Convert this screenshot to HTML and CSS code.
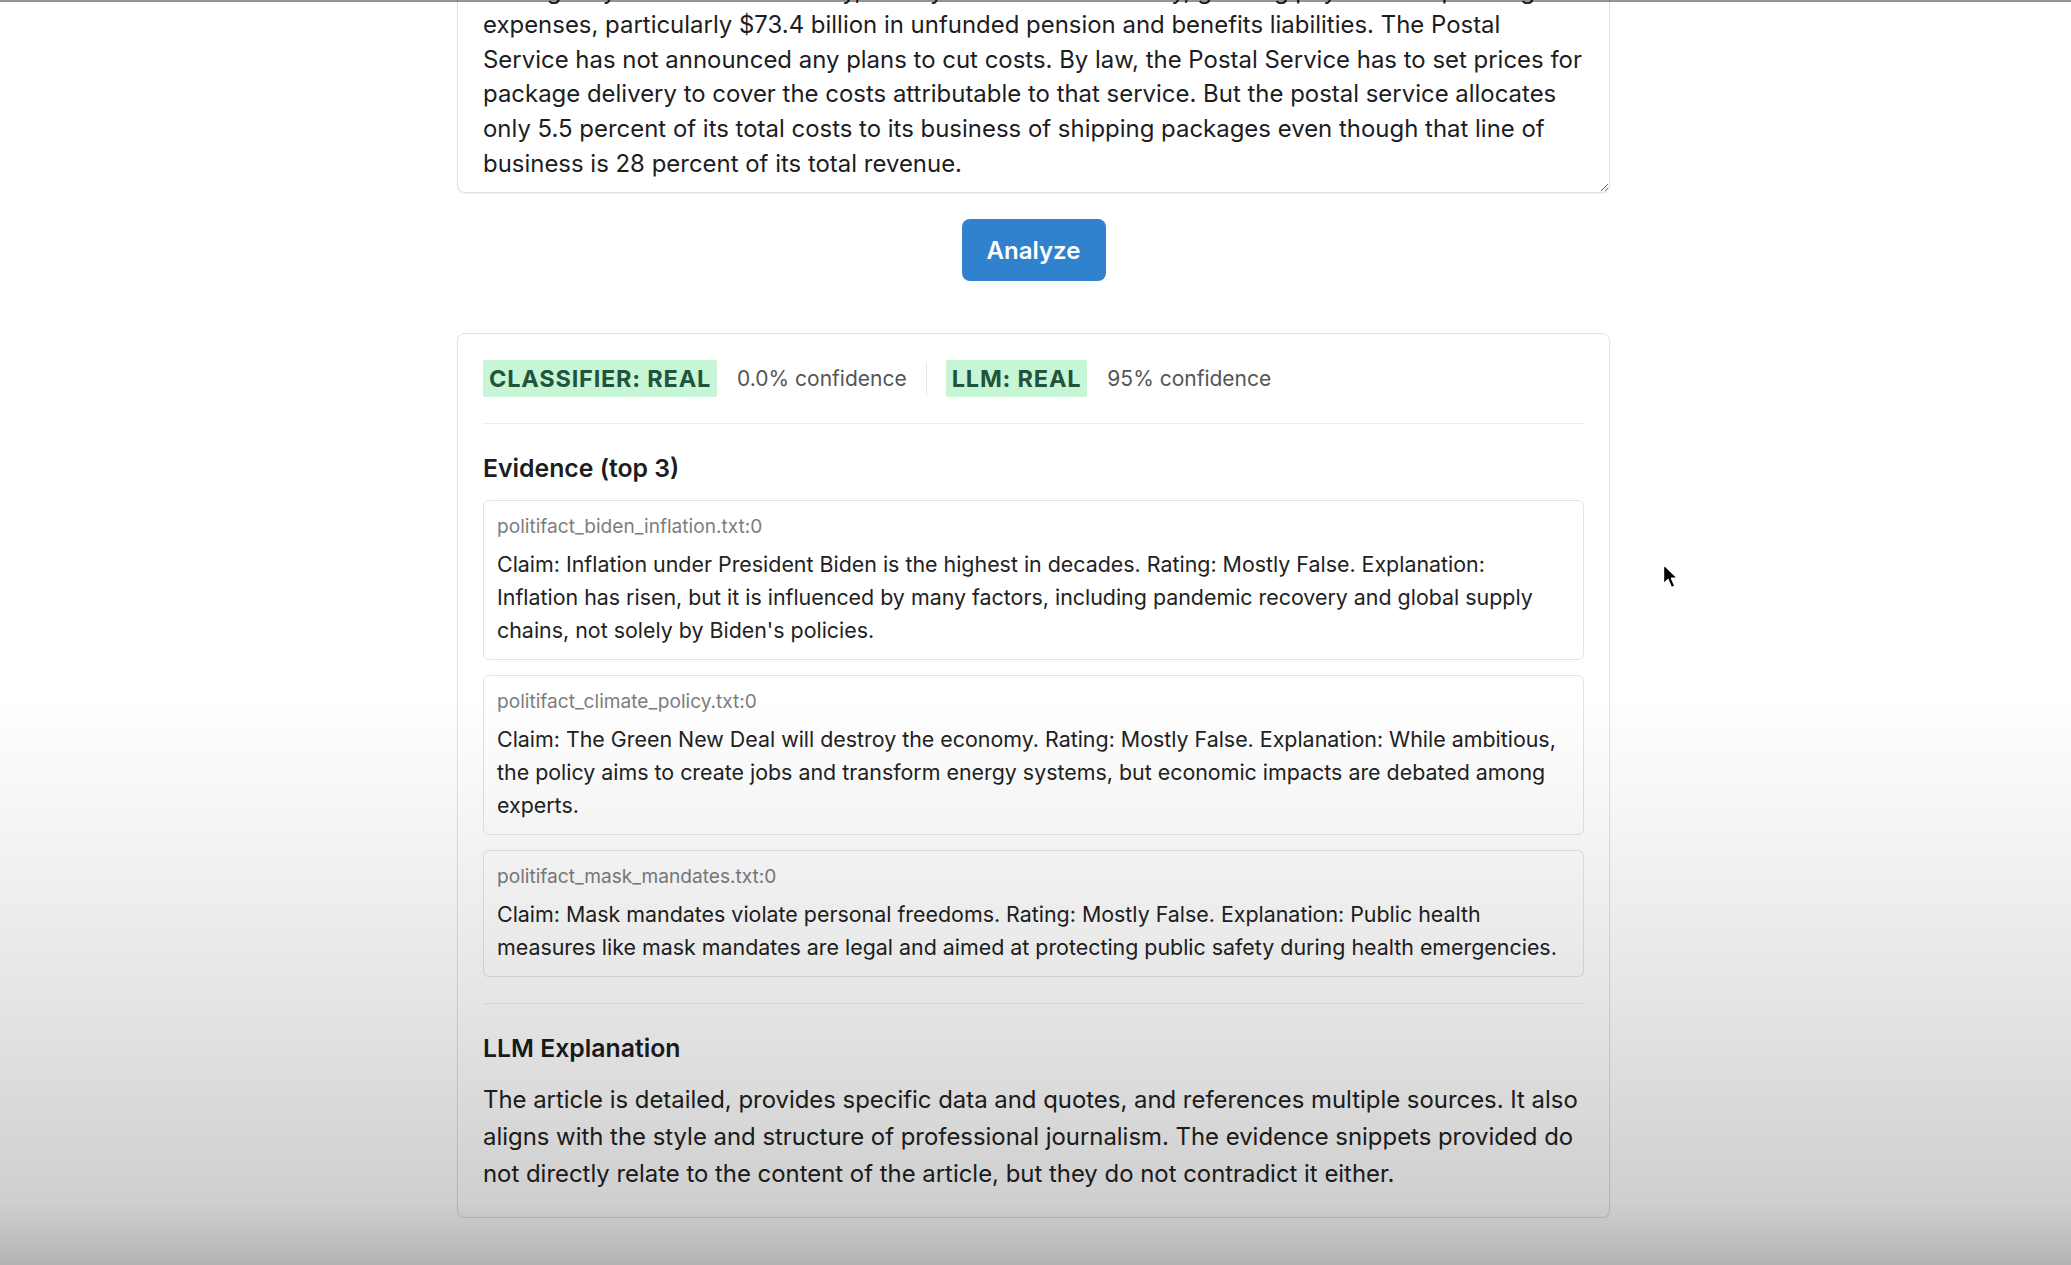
FILE: index.html
```html
<!DOCTYPE html>
<html lang="en">
<head>
<meta charset="utf-8">
<title>Fake News Analyzer</title>
<link rel="stylesheet" href="styles.css">
</head>
<body>
<main class="page">
<textarea class="article" spellcheck="false">The U.S. Postal Service lost $5.6 billion in its latest fiscal year, its tenth straight loss.
The agency's finances are shaky, mostly because of its heavy, growing payroll and operating
expenses, particularly $73.4 billion in unfunded pension and benefits liabilities. The Postal
Service has not announced any plans to cut costs. By law, the Postal Service has to set prices for
package delivery to cover the costs attributable to that service. But the postal service allocates
only 5.5 percent of its total costs to its business of shipping packages even though that line of
business is 28 percent of its total revenue.</textarea>

  <div class="actions">
    <button class="analyze" type="button">Analyze</button>
  </div>

  <section class="result">
    <div class="verdicts">
      <span class="badge">CLASSIFIER: REAL</span>
      <span class="conf">0.0% confidence</span>
      <span class="sep"></span>
      <span class="badge">LLM: REAL</span>
      <span class="conf">95% confidence</span>
    </div>

    <div class="evidence">
      <h3 class="title">Evidence (top 3)</h3>
      <div class="ev-list">
        <div class="ev">
          <div class="src">politifact_biden_inflation.txt:0</div>
          <div class="txt">Claim: Inflation under President Biden is the highest in decades. Rating: Mostly False. Explanation: Inflation has risen, but it is influenced by many factors, including pandemic recovery and global supply chains, not solely by Biden's policies.</div>
        </div>
        <div class="ev">
          <div class="src">politifact_climate_policy.txt:0</div>
          <div class="txt">Claim: The Green New Deal will destroy the economy. Rating: Mostly False. Explanation: While ambitious, the policy aims to create jobs and transform energy systems, but economic impacts are debated among experts.</div>
        </div>
        <div class="ev">
          <div class="src">politifact_mask_mandates.txt:0</div>
          <div class="txt">Claim: Mask mandates violate personal freedoms. Rating: Mostly False. Explanation: Public health measures like mask mandates are legal and aimed at protecting public safety during health emergencies.</div>
        </div>
      </div>
    </div>

    <div class="explain">
      <h3 class="title title-explain">LLM Explanation</h3>
      <p class="explain-text">The article is detailed, provides specific data and quotes, and references multiple sources. It also aligns with the style and structure of professional journalism. The evidence snippets provided do not directly relate to the content of the article, but they do not contradict it either.</p>
    </div>
  </section>
</main>

<svg class="cursor" width="20" height="28" viewBox="0 0 20 28" aria-hidden="true">
  <path d="M1.5 1.5 L1.5 21 L6 16.6 L9.4 24.6 L12.8 23.1 L9.5 15.3 L15.6 15.3 Z" fill="#000" stroke="#fff" stroke-width="1.4" stroke-linejoin="round"/>
</svg>
<div class="shade" aria-hidden="true"></div>
</body>
</html>
```

FILE: styles.css
```css
html, body {
  margin: 0;
  background: #ffffff;
}

body {
  padding-right: 4px;
  font-family: Inter, "Liberation Sans", sans-serif;
  color: #1d1d1f;
  overflow: hidden;
}

.page {
  width: 1153px;
  margin: -74px auto 0;
}

.article {
  display: block;
  box-sizing: border-box;
  width: 100%;
  height: 267px;
  margin: 0;
  padding: 12px 25px;
  border: 1px solid #e2e2e2;
  border-radius: 8px;
  font-family: inherit;
  font-size: 23.95px;
  line-height: 34.6px;
  color: #1d1d1f;
  background: #fff;
  white-space: pre;
  resize: vertical;
  overflow: hidden;
  box-shadow: 0 1px 2px rgba(0, 0, 0, 0.06);
  outline: none;
}

.actions {
  display: flex;
  justify-content: center;
  margin-top: 26px;
}

.analyze {
  width: 144px;
  height: 62px;
  border: 0;
  border-radius: 8px;
  background: #3182ce;
  color: #fff;
  font-family: inherit;
  font-size: 24px;
  font-weight: 600;
  cursor: pointer;
}

.result {
  margin-top: 52px;
  padding: 26px 25px 25px;
  border: 1px solid #e2e2e2;
  border-radius: 8px;
  background: #fff;
  box-shadow: 0 1px 2px rgba(0, 0, 0, 0.05);
}

.verdicts {
  display: flex;
  align-items: center;
  gap: 20px;
  padding-bottom: 26px;
  border-bottom: 1px solid #ededed;
}

.badge {
  display: flex;
  align-items: center;
  height: 37px;
  padding: 0 6px;
  border-radius: 2px;
  background: #c6f6d5;
  color: #22543d;
  font-size: 23.5px;
  font-weight: 700;
  letter-spacing: 0.8px;
}

.conf {
  color: #555;
  font-size: 21px;
}

.sep {
  width: 1px;
  height: 34px;
  margin: 0 -1px;
  background: #e8e8e8;
}

.title {
  margin: 29px 0 17px;
  font-size: 24.8px;
  font-weight: 600;
  line-height: 30px;
  color: #1d1d1f;
}

.title-explain {
  margin: 29px 0 18px;
}

.evidence {
  padding-bottom: 26px;
  border-bottom: 1px solid #ededed;
}

.ev-list {
  display: flex;
  flex-direction: column;
  gap: 15px;
}

.ev {
  padding: 12px 19px 12px 13px;
  border: 1px solid #e4e4e4;
  border-radius: 6px;
  background: #fff;
}

.src {
  margin-bottom: 8px;
  font-size: 19.1px;
  line-height: 27px;
  color: #7d7d7d;
}

.txt {
  font-size: 21.4px;
  line-height: 33px;
  color: #222;
}

.explain-text {
  margin: 0 -6px 0 0;
  font-size: 23.9px;
  line-height: 37px;
  color: #222;
}

.cursor {
  position: absolute;
  left: 1662px;
  top: 563px;
}

.shade {
  position: fixed;
  inset: 0;
  pointer-events: none;
  background: linear-gradient(to bottom,
    rgba(0, 0, 0, 0.42) 0,
    rgba(0, 0, 0, 0.42) 2px,
    rgba(0, 0, 0, 0) 2px,
    rgba(0, 0, 0, 0) 55%,
    rgba(0, 0, 0, 0.03) 63%,
    rgba(0, 0, 0, 0.10) 79%,
    rgba(0, 0, 0, 0.19) 95%,
    rgba(0, 0, 0, 0.25) 98%,
    rgba(0, 0, 0, 0.30) 100%);
}
```
